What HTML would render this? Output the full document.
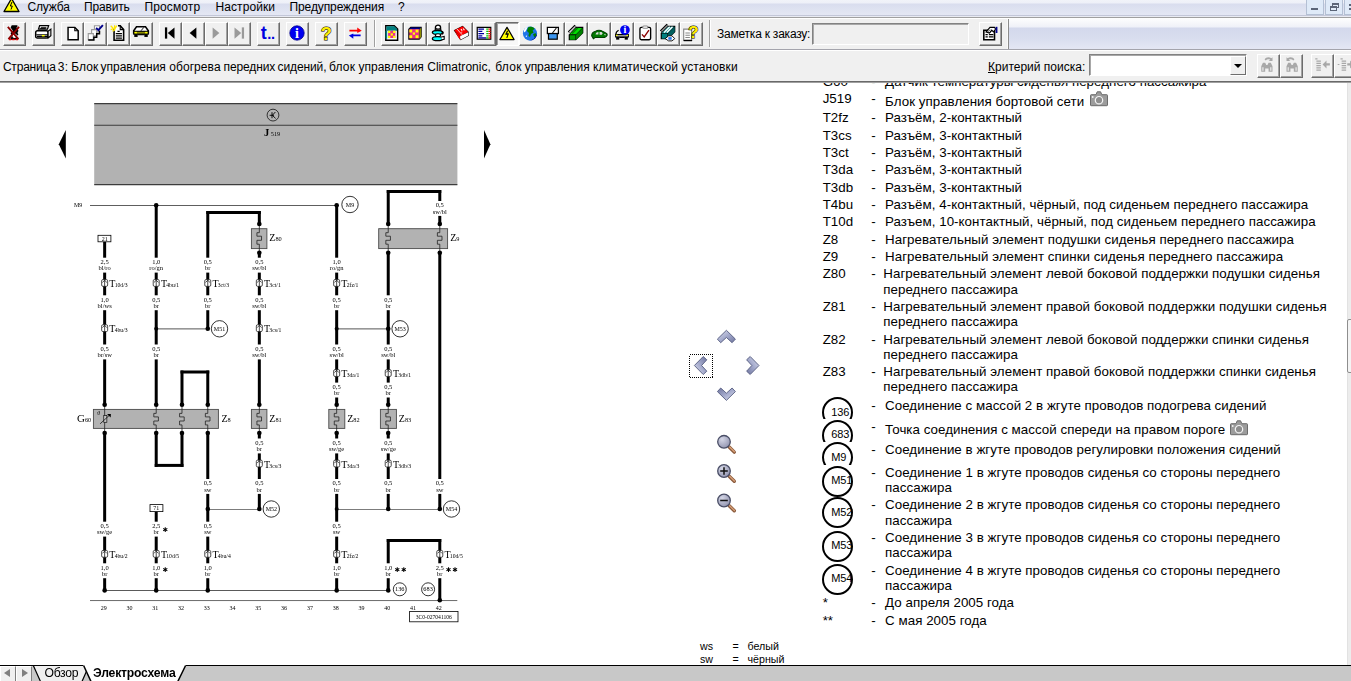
<!DOCTYPE html><html lang="ru"><head><meta charset="utf-8"><title>Электросхема</title><style>
*{box-sizing:border-box;margin:0;padding:0}
html,body{width:1351px;height:681px;overflow:hidden;background:#fff}
body{position:relative;font-family:"Liberation Sans",sans-serif;color:#000}
.abs{position:absolute}
#menubar{left:0;top:0;width:1351px;height:17px;background:linear-gradient(#f1f3f9 0,#eef0f8 3px,#d9ddee 4px,#dfe3f1 10px,#e4e7f4 15px,#c3c7d8 15px,#c3c7d8 16px,#e9ebf3 16px,#e9ebf3 17px)}
#menubar .mi{position:absolute;top:-1px;font-size:12px;line-height:16px;white-space:nowrap;color:#000}
#mline1{left:0;top:17px;width:1351px;height:1px;background:#a0a0a0}
#mline2{left:0;top:18px;width:1351px;height:1px;background:#fff}
#tb1{left:0;top:19px;width:1008px;height:30px;background:#f0f0f0}
#tb1r{left:1009px;top:18px;width:342px;height:31px;background:linear-gradient(#fefefe 0,#eff1f8 9px,#d3d8ec 10px,#d8ddee 20px,#e3e6f3 30px)}
#tline1{left:0;top:49px;width:1351px;height:1px;background:#a4a4ac}
#tline2{left:0;top:50px;width:1351px;height:1px;background:#fff}
#tb2{left:0;top:51px;width:1351px;height:30px;background:#f0f0f0}
#tb2l1{left:0;top:81px;width:1351px;height:1px;background:#696969}
#tb2l2{left:0;top:82px;width:1351px;height:1px;background:#a0a0a0}
.btn{position:absolute;width:23px;height:24px;background:#f0f0f0;border:1px solid;border-color:#fff #6c6c6c #6c6c6c #fff;box-shadow:inset -1px -1px 0 #a2a2a2}
.btn.down{background:#f8f8f8;border-color:#6c6c6c #fff #fff #6c6c6c;box-shadow:inset 1px 1px 0 #a2a2a2}
.btn svg{position:absolute;left:0.5px;top:0.5px;width:18px;height:18px;overflow:visible}
.sep{position:absolute;top:20px;width:2px;height:27px;border-left:1px solid #a0a0a0;border-right:1px solid #fff}
.lbl{position:absolute;font-size:12px;white-space:nowrap;line-height:16px}
.sunk{position:absolute;border:1px solid;border-color:#828282 #fff #fff #828282;box-shadow:inset 1px 1px 0 #a8a8a8}
.wbtn{position:absolute;top:-1px;height:16px;width:18px;background:#dfeaf8;border:1px solid #b4c0d4}
#tabbar{left:0;top:665px;width:1351px;height:16px;background:#c8c8c8;border-top:1.5px solid #000}

#rp{left:800px;top:83px;width:547px;height:582px;overflow:hidden;font-size:13.33px;line-height:16px;color:#000}
#rp .k{position:absolute;left:22.7px;white-space:nowrap}
#rp .d{position:absolute;left:71.2px;white-space:nowrap}
#rp .t{position:absolute;left:85.1px;white-space:nowrap;letter-spacing:.035px}
#rp .cam{position:absolute}
.cir{position:absolute;left:22px;width:31px;overflow:hidden}
.cir i{position:absolute;left:0;top:0;width:31px;height:31px;border:2px solid #000;border-radius:50%;display:block}
.cir b{position:absolute;left:9.3px;top:8.6px;font-weight:normal;font-size:11px;line-height:12px;font-style:normal;white-space:nowrap;letter-spacing:-.15px}
#sb{left:1347px;top:83px;width:4px;height:582px;background:#ececec;border-left:1px solid #e2e2e2}
#sbt{left:1347px;top:319px;width:6px;height:54px;background:#f4f4f4;border:1px solid #8e8e8e;border-radius:2px}
</style></head><body><svg class="abs" id="diagram" style="left:0;top:83px;will-change:transform" width="560" height="582" viewBox="0 83 560 582" font-family='"Liberation Serif",serif' fill="#000"><rect x="94.2" y="103.6" width="363.2" height="81" fill="#b2b2b2"/><path d="M94.2 103.6H457.4M94.2 125.3H457.4M94.2 184.6H457.4" stroke="#3c3c3c" stroke-width="1.1"/><circle cx="273" cy="115.1" r="5.9" fill="none" stroke="#111" stroke-width="0.8"/><path d="M269.6 115.3H274M272 112.2V118.2M275.4 112L272.3 115.3L275.6 118.4" stroke="#000" stroke-width="0.9" fill="none"/><text x="264" y="136" font-size="10.5" font-weight="bold">J<tspan font-size="6.3" font-weight="normal" dx="1.5">519</tspan></text><path d="M58.8 144.2L65.8 129.9V158.5Z" fill="#000"/><path d="M490.4 144.3L484 130V158.6Z" fill="#000"/><path d="M90 205.5H336.67" stroke="#5e5e5e" stroke-width="1"/><text x="74" y="207.3" font-size="6" text-anchor="start" font-weight="normal" fill="#000">M9</text><path d="M156.21 328.9H207.77" stroke="#555" stroke-width="1"/><path d="M336.67 328.9H388.23" stroke="#555" stroke-width="1"/><path d="M207.77 509.5H259.33" stroke="#7c7c7c" stroke-width="1"/><path d="M336.67 509.5H439.79" stroke="#7c7c7c" stroke-width="1"/><path d="M104.65 590.5H388.23" stroke="#5a5a5a" stroke-width="1"/><path d="M90 600.55H457.3" stroke="#6c6c6c" stroke-width="1"/><rect x="251.4" y="228.7" width="15.5" height="19.9" fill="#b2b2b2" stroke="#4a4a4a" stroke-width="0.9"/><rect x="378.7" y="228.7" width="68.9" height="19.9" fill="#b2b2b2" stroke="#4a4a4a" stroke-width="0.9"/><rect x="93.4" y="409.4" width="125.0" height="19.0" fill="#b2b2b2" stroke="#4a4a4a" stroke-width="0.9"/><rect x="251.4" y="409.4" width="15.5" height="19.0" fill="#b2b2b2" stroke="#4a4a4a" stroke-width="0.9"/><rect x="328.8" y="409.4" width="16.0" height="19.0" fill="#b2b2b2" stroke="#4a4a4a" stroke-width="0.9"/><rect x="380.4" y="409.4" width="16.0" height="19.0" fill="#b2b2b2" stroke="#4a4a4a" stroke-width="0.9"/><path d="M104.65 241.8V257.7" stroke="#000" stroke-width="3.0"/><text x="104.65" y="264.0" font-size="6.5" text-anchor="middle" font-weight="normal" fill="#000">2,5</text><text x="104.65" y="270.35" font-size="6.5" text-anchor="middle" font-weight="normal" fill="#000">bl/ro</text><path d="M104.65 272.6V295.3" stroke="#000" stroke-width="3.0"/><text x="104.65" y="301.6" font-size="6.5" text-anchor="middle" font-weight="normal" fill="#000">1,0</text><text x="104.65" y="307.95" font-size="6.5" text-anchor="middle" font-weight="normal" fill="#000">bl/ws</text><path d="M104.65 310.20000000000005V344.5" stroke="#000" stroke-width="3.0"/><text x="104.65" y="350.8" font-size="6.5" text-anchor="middle" font-weight="normal" fill="#000">0,5</text><text x="104.65" y="357.15" font-size="6.5" text-anchor="middle" font-weight="normal" fill="#000">br/sw</text><path d="M104.65 359.40000000000003V404.7" stroke="#000" stroke-width="3.0"/><path d="M104.65 433V521.7" stroke="#000" stroke-width="3.0"/><text x="104.65" y="528.0" font-size="6.5" text-anchor="middle" font-weight="normal" fill="#000">0,5</text><text x="104.65" y="534.35" font-size="6.5" text-anchor="middle" font-weight="normal" fill="#000">sw/ge</text><path d="M104.65 536.6V563.3000000000001" stroke="#000" stroke-width="3.0"/><text x="104.65" y="569.6" font-size="6.5" text-anchor="middle" font-weight="normal" fill="#000">1,0</text><text x="104.65" y="575.95" font-size="6.5" text-anchor="middle" font-weight="normal" fill="#000">br</text><path d="M104.65 578.2V590.4" stroke="#000" stroke-width="3.0"/><rect x="98" y="235.3" width="12.9" height="6.5" fill="#fff" stroke="#000" stroke-width="0.8"/><text x="104.65" y="240.9" font-size="6" text-anchor="middle" font-weight="normal" fill="#000">21</text><path d="M156.21 205.2V257.7" stroke="#000" stroke-width="3.0"/><text x="156.21" y="264.0" font-size="6.5" text-anchor="middle" font-weight="normal" fill="#000">1,0</text><text x="156.21" y="270.35" font-size="6.5" text-anchor="middle" font-weight="normal" fill="#000">ro/gn</text><path d="M156.21 272.6V295.3" stroke="#000" stroke-width="3.0"/><text x="156.21" y="301.6" font-size="6.5" text-anchor="middle" font-weight="normal" fill="#000">0,5</text><text x="156.21" y="307.95" font-size="6.5" text-anchor="middle" font-weight="normal" fill="#000">br</text><path d="M156.21 310.20000000000005V344.5" stroke="#000" stroke-width="3.0"/><text x="156.21" y="350.8" font-size="6.5" text-anchor="middle" font-weight="normal" fill="#000">0,5</text><text x="156.21" y="357.15" font-size="6.5" text-anchor="middle" font-weight="normal" fill="#000">br</text><path d="M156.21 359.40000000000003V404.7" stroke="#000" stroke-width="3.0"/><path d="M156.21 433V466.9" stroke="#000" stroke-width="3.0"/><path d="M154.71 465.4H183.49" stroke="#000" stroke-width="3.0"/><path d="M181.99 433V466.9" stroke="#000" stroke-width="3.0"/><path d="M156.21 511.7V521.7" stroke="#000" stroke-width="3.0"/><text x="156.21" y="528.0" font-size="6.5" text-anchor="middle" font-weight="normal" fill="#000">2,5</text><text x="156.21" y="534.35" font-size="6.5" text-anchor="middle" font-weight="normal" fill="#000">br</text><path d="M156.21 536.6V563.3000000000001" stroke="#000" stroke-width="3.0"/><text x="156.21" y="569.6" font-size="6.5" text-anchor="middle" font-weight="normal" fill="#000">1,0</text><text x="156.21" y="575.95" font-size="6.5" text-anchor="middle" font-weight="normal" fill="#000">br</text><path d="M156.21 578.2V590.4" stroke="#000" stroke-width="3.0"/><rect x="150" y="504.6" width="12.9" height="7" fill="#fff" stroke="#000" stroke-width="0.8"/><text x="156.21" y="510.4" font-size="6" text-anchor="middle" font-weight="normal" fill="#000">71</text><path d="M181.99 370.5V404.7" stroke="#000" stroke-width="3.0"/><path d="M180.49 372.0H209.27" stroke="#000" stroke-width="3.0"/><path d="M207.77 370.5V404.7" stroke="#000" stroke-width="3.0"/><path d="M206.27 212.6H260.83" stroke="#000" stroke-width="3.0"/><path d="M207.77 211.1V257.7" stroke="#000" stroke-width="3.0"/><text x="207.77" y="264.0" font-size="6.5" text-anchor="middle" font-weight="normal" fill="#000">0,5</text><text x="207.77" y="270.35" font-size="6.5" text-anchor="middle" font-weight="normal" fill="#000">br</text><path d="M207.77 272.6V295.3" stroke="#000" stroke-width="3.0"/><text x="207.77" y="301.6" font-size="6.5" text-anchor="middle" font-weight="normal" fill="#000">0,5</text><text x="207.77" y="307.95" font-size="6.5" text-anchor="middle" font-weight="normal" fill="#000">br</text><path d="M207.77 310.20000000000005V328.8" stroke="#000" stroke-width="3.0"/><path d="M207.77 433V479.0" stroke="#000" stroke-width="3.0"/><text x="207.77" y="485.3" font-size="6.5" text-anchor="middle" font-weight="normal" fill="#000">0,5</text><text x="207.77" y="491.65" font-size="6.5" text-anchor="middle" font-weight="normal" fill="#000">sw</text><path d="M207.77 493.90000000000003V521.7" stroke="#000" stroke-width="3.0"/><text x="207.77" y="528.0" font-size="6.5" text-anchor="middle" font-weight="normal" fill="#000">0,5</text><text x="207.77" y="534.35" font-size="6.5" text-anchor="middle" font-weight="normal" fill="#000">sw</text><path d="M207.77 536.6V563.3000000000001" stroke="#000" stroke-width="3.0"/><text x="207.77" y="569.6" font-size="6.5" text-anchor="middle" font-weight="normal" fill="#000">1,0</text><text x="207.77" y="575.95" font-size="6.5" text-anchor="middle" font-weight="normal" fill="#000">br</text><path d="M207.77 578.2V590.4" stroke="#000" stroke-width="3.0"/><path d="M259.33 211.1V224" stroke="#000" stroke-width="3.0"/><path d="M259.33 252.7V257.7" stroke="#000" stroke-width="3.0"/><text x="259.33" y="264.0" font-size="6.5" text-anchor="middle" font-weight="normal" fill="#000">0,5</text><text x="259.33" y="270.35" font-size="6.5" text-anchor="middle" font-weight="normal" fill="#000">sw/bl</text><path d="M259.33 272.6V295.3" stroke="#000" stroke-width="3.0"/><text x="259.33" y="301.6" font-size="6.5" text-anchor="middle" font-weight="normal" fill="#000">0,5</text><text x="259.33" y="307.95" font-size="6.5" text-anchor="middle" font-weight="normal" fill="#000">sw/bl</text><path d="M259.33 310.20000000000005V344.5" stroke="#000" stroke-width="3.0"/><text x="259.33" y="350.8" font-size="6.5" text-anchor="middle" font-weight="normal" fill="#000">0,5</text><text x="259.33" y="357.15" font-size="6.5" text-anchor="middle" font-weight="normal" fill="#000">sw/bl</text><path d="M259.33 359.40000000000003V404.7" stroke="#000" stroke-width="3.0"/><path d="M259.33 433V438.5" stroke="#000" stroke-width="3.0"/><text x="259.33" y="444.8" font-size="6.5" text-anchor="middle" font-weight="normal" fill="#000">0,5</text><text x="259.33" y="451.15" font-size="6.5" text-anchor="middle" font-weight="normal" fill="#000">br</text><path d="M259.33 453.40000000000003V479.0" stroke="#000" stroke-width="3.0"/><text x="259.33" y="485.3" font-size="6.5" text-anchor="middle" font-weight="normal" fill="#000">0,5</text><text x="259.33" y="491.65" font-size="6.5" text-anchor="middle" font-weight="normal" fill="#000">br</text><path d="M259.33 493.90000000000003V509" stroke="#000" stroke-width="3.0"/><path d="M336.67 205.2V257.7" stroke="#000" stroke-width="3.0"/><text x="336.67" y="264.0" font-size="6.5" text-anchor="middle" font-weight="normal" fill="#000">1,0</text><text x="336.67" y="270.35" font-size="6.5" text-anchor="middle" font-weight="normal" fill="#000">ro/gn</text><path d="M336.67 272.6V295.3" stroke="#000" stroke-width="3.0"/><text x="336.67" y="301.6" font-size="6.5" text-anchor="middle" font-weight="normal" fill="#000">0,5</text><text x="336.67" y="307.95" font-size="6.5" text-anchor="middle" font-weight="normal" fill="#000">br</text><path d="M336.67 310.20000000000005V344.5" stroke="#000" stroke-width="3.0"/><text x="336.67" y="350.8" font-size="6.5" text-anchor="middle" font-weight="normal" fill="#000">0,5</text><text x="336.67" y="357.15" font-size="6.5" text-anchor="middle" font-weight="normal" fill="#000">sw/bl</text><path d="M336.67 359.40000000000003V382.59999999999997" stroke="#000" stroke-width="3.0"/><text x="336.67" y="388.9" font-size="6.5" text-anchor="middle" font-weight="normal" fill="#000">0,5</text><text x="336.67" y="395.25" font-size="6.5" text-anchor="middle" font-weight="normal" fill="#000">br</text><path d="M336.67 397.5V404.7" stroke="#000" stroke-width="3.0"/><path d="M336.67 433V438.5" stroke="#000" stroke-width="3.0"/><text x="336.67" y="444.8" font-size="6.5" text-anchor="middle" font-weight="normal" fill="#000">0,5</text><text x="336.67" y="451.15" font-size="6.5" text-anchor="middle" font-weight="normal" fill="#000">sw/ge</text><path d="M336.67 453.40000000000003V479.0" stroke="#000" stroke-width="3.0"/><text x="336.67" y="485.3" font-size="6.5" text-anchor="middle" font-weight="normal" fill="#000">0,5</text><text x="336.67" y="491.65" font-size="6.5" text-anchor="middle" font-weight="normal" fill="#000">br</text><path d="M336.67 493.90000000000003V521.7" stroke="#000" stroke-width="3.0"/><text x="336.67" y="528.0" font-size="6.5" text-anchor="middle" font-weight="normal" fill="#000">0,5</text><text x="336.67" y="534.35" font-size="6.5" text-anchor="middle" font-weight="normal" fill="#000">sw</text><path d="M336.67 536.6V563.3000000000001" stroke="#000" stroke-width="3.0"/><text x="336.67" y="569.6" font-size="6.5" text-anchor="middle" font-weight="normal" fill="#000">1,0</text><text x="336.67" y="575.95" font-size="6.5" text-anchor="middle" font-weight="normal" fill="#000">br</text><path d="M336.67 578.2V590.4" stroke="#000" stroke-width="3.0"/><path d="M386.73 191.6H441.29" stroke="#000" stroke-width="3.0"/><path d="M388.23 190.1V224" stroke="#000" stroke-width="3.0"/><path d="M388.23 252.7V295.3" stroke="#000" stroke-width="3.0"/><text x="388.23" y="301.6" font-size="6.5" text-anchor="middle" font-weight="normal" fill="#000">0,5</text><text x="388.23" y="307.95" font-size="6.5" text-anchor="middle" font-weight="normal" fill="#000">br</text><path d="M388.23 310.20000000000005V344.5" stroke="#000" stroke-width="3.0"/><text x="388.23" y="350.8" font-size="6.5" text-anchor="middle" font-weight="normal" fill="#000">0,5</text><text x="388.23" y="357.15" font-size="6.5" text-anchor="middle" font-weight="normal" fill="#000">sw/bl</text><path d="M388.23 359.40000000000003V382.59999999999997" stroke="#000" stroke-width="3.0"/><text x="388.23" y="388.9" font-size="6.5" text-anchor="middle" font-weight="normal" fill="#000">0,5</text><text x="388.23" y="395.25" font-size="6.5" text-anchor="middle" font-weight="normal" fill="#000">br</text><path d="M388.23 397.5V404.7" stroke="#000" stroke-width="3.0"/><path d="M388.23 433V438.5" stroke="#000" stroke-width="3.0"/><text x="388.23" y="444.8" font-size="6.5" text-anchor="middle" font-weight="normal" fill="#000">0,5</text><text x="388.23" y="451.15" font-size="6.5" text-anchor="middle" font-weight="normal" fill="#000">sw/ge</text><path d="M388.23 453.40000000000003V479.0" stroke="#000" stroke-width="3.0"/><text x="388.23" y="485.3" font-size="6.5" text-anchor="middle" font-weight="normal" fill="#000">0,5</text><text x="388.23" y="491.65" font-size="6.5" text-anchor="middle" font-weight="normal" fill="#000">br</text><path d="M388.23 493.90000000000003V509" stroke="#000" stroke-width="3.0"/><path d="M386.73 540.5H441.29" stroke="#000" stroke-width="3.0"/><path d="M388.23 539V563.3000000000001" stroke="#000" stroke-width="3.0"/><text x="388.23" y="569.6" font-size="6.5" text-anchor="middle" font-weight="normal" fill="#000">1,0</text><text x="388.23" y="575.95" font-size="6.5" text-anchor="middle" font-weight="normal" fill="#000">br</text><path d="M388.23 578.2V590.4" stroke="#000" stroke-width="3.0"/><path d="M439.79 190.1V201.0" stroke="#000" stroke-width="3.0"/><text x="439.79" y="207.3" font-size="6.5" text-anchor="middle" font-weight="normal" fill="#000">0,5</text><text x="439.79" y="213.65" font-size="6.5" text-anchor="middle" font-weight="normal" fill="#000">sw/bl</text><path d="M439.79 215.9V224" stroke="#000" stroke-width="3.0"/><path d="M439.79 252.7V479.0" stroke="#000" stroke-width="3.0"/><text x="439.79" y="485.3" font-size="6.5" text-anchor="middle" font-weight="normal" fill="#000">0,5</text><text x="439.79" y="491.65" font-size="6.5" text-anchor="middle" font-weight="normal" fill="#000">sw</text><path d="M439.79 493.90000000000003V509" stroke="#000" stroke-width="3.0"/><path d="M439.79 539V563.3000000000001" stroke="#000" stroke-width="3.0"/><text x="439.79" y="569.6" font-size="6.5" text-anchor="middle" font-weight="normal" fill="#000">2,5</text><text x="439.79" y="575.95" font-size="6.5" text-anchor="middle" font-weight="normal" fill="#000">br</text><path d="M439.79 578.2V600.3" stroke="#000" stroke-width="3.0"/><path d="M156.21 404.9V413.4H153.81V416.9H158.41V421.0H153.81V424.9H156.21V432.9" fill="none" stroke="#222" stroke-width="0.8"/><path d="M181.99 404.9V413.4H179.59V416.9H184.19V421.0H179.59V424.9H181.99V432.9" fill="none" stroke="#222" stroke-width="0.8"/><path d="M207.77 404.9V413.4H205.37V416.9H209.97V421.0H205.37V424.9H207.77V432.9" fill="none" stroke="#222" stroke-width="0.8"/><path d="M259.33 404.9V413.4H256.93V416.9H261.53V421.0H256.93V424.9H259.33V432.9" fill="none" stroke="#222" stroke-width="0.8"/><path d="M336.67 404.9V413.4H334.27000000000004V416.9H338.87V421.0H334.27000000000004V424.9H336.67V432.9" fill="none" stroke="#222" stroke-width="0.8"/><path d="M388.23 404.9V413.4H385.83000000000004V416.9H390.43V421.0H385.83000000000004V424.9H388.23V432.9" fill="none" stroke="#222" stroke-width="0.8"/><path d="M259.33 224.2V232.7H256.93V236.2H261.53V240.29999999999998H256.93V244.2H259.33V253.1" fill="none" stroke="#222" stroke-width="0.8"/><path d="M388.23 224.2V232.7H385.83000000000004V236.2H390.43V240.29999999999998H385.83000000000004V244.2H388.23V253.1" fill="none" stroke="#222" stroke-width="0.8"/><path d="M439.79 224.2V232.7H437.39000000000004V236.2H441.99V240.29999999999998H437.39000000000004V244.2H439.79V253.1" fill="none" stroke="#222" stroke-width="0.8"/><path d="M104.65 404.7V433" stroke="#222" stroke-width="0.8"/><rect x="103.75" y="415.6" width="3.1" height="6.7" fill="#c4c4c4" stroke="#111" stroke-width="0.7"/><path d="M100.15 423.8L109.25 415.4" stroke="#111" stroke-width="0.8"/><path d="M107.05 414.1H110.85L110.65 417.6Z" fill="#000"/><text x="98.55" y="414.8" font-size="5.6" text-anchor="middle" font-weight="normal" fill="#000">ϑ</text><circle cx="104.65" cy="404.7" r="2.3" fill="#000"/><circle cx="104.65" cy="433" r="2.3" fill="#000"/><circle cx="156.21" cy="404.7" r="2.3" fill="#000"/><circle cx="156.21" cy="433" r="2.3" fill="#000"/><circle cx="181.99" cy="404.7" r="2.3" fill="#000"/><circle cx="181.99" cy="433" r="2.3" fill="#000"/><circle cx="207.77" cy="404.7" r="2.3" fill="#000"/><circle cx="207.77" cy="433" r="2.3" fill="#000"/><circle cx="259.33" cy="404.7" r="2.3" fill="#000"/><circle cx="259.33" cy="433" r="2.3" fill="#000"/><circle cx="336.67" cy="404.7" r="2.3" fill="#000"/><circle cx="336.67" cy="433" r="2.3" fill="#000"/><circle cx="388.23" cy="404.7" r="2.3" fill="#000"/><circle cx="388.23" cy="433" r="2.3" fill="#000"/><circle cx="259.33" cy="224" r="2.3" fill="#000"/><circle cx="259.33" cy="252.7" r="2.3" fill="#000"/><circle cx="388.23" cy="224" r="2.3" fill="#000"/><circle cx="388.23" cy="252.7" r="2.3" fill="#000"/><circle cx="439.79" cy="224" r="2.3" fill="#000"/><circle cx="439.79" cy="252.7" r="2.3" fill="#000"/><circle cx="156.21" cy="205.2" r="2.3" fill="#000"/><circle cx="336.67" cy="205.2" r="2.3" fill="#000"/><circle cx="156.21" cy="328.8" r="2.0" fill="#000"/><circle cx="207.77" cy="328.8" r="2.3" fill="#000"/><circle cx="336.67" cy="328.8" r="2.0" fill="#000"/><circle cx="388.23" cy="328.8" r="2.3" fill="#000"/><circle cx="207.77" cy="509" r="2.3" fill="#000"/><circle cx="259.33" cy="509" r="2.3" fill="#000"/><circle cx="336.67" cy="509" r="2.0" fill="#000"/><circle cx="388.23" cy="509" r="2.3" fill="#000"/><circle cx="439.79" cy="509" r="2.3" fill="#000"/><circle cx="104.65" cy="590.4" r="2.3" fill="#000"/><circle cx="156.21" cy="590.4" r="2.3" fill="#000"/><circle cx="207.77" cy="590.4" r="2.3" fill="#000"/><circle cx="336.67" cy="590.4" r="2.3" fill="#000"/><circle cx="388.23" cy="590.4" r="2.3" fill="#000"/><circle cx="439.79" cy="600.3" r="2.3" fill="#000"/><rect x="101.65" y="279.55" width="6.0" height="6.8" rx="1.3" fill="#fff" stroke="#222" stroke-width="0.8"/><path d="M104.65 279.75V286.35M102.45 282.45L104.65 280.25L106.85000000000001 282.45" stroke="#111" stroke-width="0.75" fill="none"/><text x="109.35" y="287.05" font-size="10">T</text><text transform="translate(114.65 287.05) scale(0.84 1)" font-size="6.8">10d/3</text><rect x="153.21" y="279.55" width="6.0" height="6.8" rx="1.3" fill="#fff" stroke="#222" stroke-width="0.8"/><path d="M156.21 279.75V286.35M154.01000000000002 282.45L156.21 280.25L158.41 282.45" stroke="#111" stroke-width="0.75" fill="none"/><text x="160.91" y="287.05" font-size="10">T</text><text transform="translate(166.21 287.05) scale(0.84 1)" font-size="6.8">4bu/1</text><rect x="204.77" y="279.55" width="6.0" height="6.8" rx="1.3" fill="#fff" stroke="#222" stroke-width="0.8"/><path d="M207.77 279.75V286.35M205.57000000000002 282.45L207.77 280.25L209.97 282.45" stroke="#111" stroke-width="0.75" fill="none"/><text x="212.47" y="287.05" font-size="10">T</text><text transform="translate(217.77 287.05) scale(0.84 1)" font-size="6.8">3ct/3</text><rect x="256.33" y="279.55" width="6.0" height="6.8" rx="1.3" fill="#fff" stroke="#222" stroke-width="0.8"/><path d="M259.33 279.75V286.35M257.13 282.45L259.33 280.25L261.53 282.45" stroke="#111" stroke-width="0.75" fill="none"/><text x="264.03" y="287.05" font-size="10">T</text><text transform="translate(269.33 287.05) scale(0.84 1)" font-size="6.8">3ct/1</text><rect x="333.67" y="279.55" width="6.0" height="6.8" rx="1.3" fill="#fff" stroke="#222" stroke-width="0.8"/><path d="M336.67 279.75V286.35M334.47 282.45L336.67 280.25L338.87 282.45" stroke="#111" stroke-width="0.75" fill="none"/><text x="341.37" y="287.05" font-size="10">T</text><text transform="translate(346.67 287.05) scale(0.84 1)" font-size="6.8">2fz/1</text><rect x="101.65" y="324.75" width="6.0" height="6.8" rx="1.3" fill="#fff" stroke="#222" stroke-width="0.8"/><path d="M104.65 324.95V331.55M102.45 327.65L104.65 325.45L106.85000000000001 327.65" stroke="#111" stroke-width="0.75" fill="none"/><text x="109.35" y="332.25" font-size="10">T</text><text transform="translate(114.65 332.25) scale(0.84 1)" font-size="6.8">4bu/3</text><rect x="256.33" y="324.75" width="6.0" height="6.8" rx="1.3" fill="#fff" stroke="#222" stroke-width="0.8"/><path d="M259.33 324.95V331.55M257.13 327.65L259.33 325.45L261.53 327.65" stroke="#111" stroke-width="0.75" fill="none"/><text x="264.03" y="332.25" font-size="10">T</text><text transform="translate(269.33 332.25) scale(0.84 1)" font-size="6.8">3cs/1</text><rect x="333.67" y="369.65" width="6.0" height="6.8" rx="1.3" fill="#fff" stroke="#222" stroke-width="0.8"/><path d="M336.67 369.85V376.45M334.47 372.55L336.67 370.35L338.87 372.55" stroke="#111" stroke-width="0.75" fill="none"/><text x="341.37" y="377.15" font-size="10">T</text><text transform="translate(346.67 377.15) scale(0.84 1)" font-size="6.8">3da/1</text><rect x="385.23" y="369.65" width="6.0" height="6.8" rx="1.3" fill="#fff" stroke="#222" stroke-width="0.8"/><path d="M388.23 369.85V376.45M386.03000000000003 372.55L388.23 370.35L390.43 372.55" stroke="#111" stroke-width="0.75" fill="none"/><text x="392.93" y="377.15" font-size="10">T</text><text transform="translate(398.23 377.15) scale(0.84 1)" font-size="6.8">3db/1</text><rect x="256.33" y="460.15" width="6.0" height="6.8" rx="1.3" fill="#fff" stroke="#222" stroke-width="0.8"/><path d="M259.33 460.35V466.95M257.13 463.05L259.33 460.85L261.53 463.05" stroke="#111" stroke-width="0.75" fill="none"/><text x="264.03" y="467.65" font-size="10">T</text><text transform="translate(269.33 467.65) scale(0.84 1)" font-size="6.8">3cs/3</text><rect x="333.67" y="460.15" width="6.0" height="6.8" rx="1.3" fill="#fff" stroke="#222" stroke-width="0.8"/><path d="M336.67 460.35V466.95M334.47 463.05L336.67 460.85L338.87 463.05" stroke="#111" stroke-width="0.75" fill="none"/><text x="341.37" y="467.65" font-size="10">T</text><text transform="translate(346.67 467.65) scale(0.84 1)" font-size="6.8">3da/3</text><rect x="385.23" y="460.15" width="6.0" height="6.8" rx="1.3" fill="#fff" stroke="#222" stroke-width="0.8"/><path d="M388.23 460.35V466.95M386.03000000000003 463.05L388.23 460.85L390.43 463.05" stroke="#111" stroke-width="0.75" fill="none"/><text x="392.93" y="467.65" font-size="10">T</text><text transform="translate(398.23 467.65) scale(0.84 1)" font-size="6.8">3db/3</text><rect x="101.65" y="550.45" width="6.0" height="6.8" rx="1.3" fill="#fff" stroke="#222" stroke-width="0.8"/><path d="M104.65 550.65V557.25M102.45 553.35L104.65 551.15L106.85000000000001 553.35" stroke="#111" stroke-width="0.75" fill="none"/><text x="109.35" y="557.95" font-size="10">T</text><text transform="translate(114.65 557.95) scale(0.84 1)" font-size="6.8">4bu/2</text><rect x="153.21" y="550.45" width="6.0" height="6.8" rx="1.3" fill="#fff" stroke="#222" stroke-width="0.8"/><path d="M156.21 550.65V557.25M154.01000000000002 553.35L156.21 551.15L158.41 553.35" stroke="#111" stroke-width="0.75" fill="none"/><text x="160.91" y="557.95" font-size="10">T</text><text transform="translate(166.21 557.95) scale(0.84 1)" font-size="6.8">10d/5</text><rect x="204.77" y="550.45" width="6.0" height="6.8" rx="1.3" fill="#fff" stroke="#222" stroke-width="0.8"/><path d="M207.77 550.65V557.25M205.57000000000002 553.35L207.77 551.15L209.97 553.35" stroke="#111" stroke-width="0.75" fill="none"/><text x="212.47" y="557.95" font-size="10">T</text><text transform="translate(217.77 557.95) scale(0.84 1)" font-size="6.8">4bu/4</text><rect x="333.67" y="550.45" width="6.0" height="6.8" rx="1.3" fill="#fff" stroke="#222" stroke-width="0.8"/><path d="M336.67 550.65V557.25M334.47 553.35L336.67 551.15L338.87 553.35" stroke="#111" stroke-width="0.75" fill="none"/><text x="341.37" y="557.95" font-size="10">T</text><text transform="translate(346.67 557.95) scale(0.84 1)" font-size="6.8">2fz/2</text><rect x="436.79" y="550.45" width="6.0" height="6.8" rx="1.3" fill="#fff" stroke="#222" stroke-width="0.8"/><path d="M439.79 550.65V557.25M437.59000000000003 553.35L439.79 551.15L441.99 553.35" stroke="#111" stroke-width="0.75" fill="none"/><text x="444.49" y="557.95" font-size="10">T</text><text transform="translate(449.79 557.95) scale(0.84 1)" font-size="6.8">10d/5</text><circle cx="350" cy="204.5" r="8.2" fill="#fff" stroke="#000" stroke-width="0.8"/><text x="350" y="206.6" font-size="6" text-anchor="middle" font-weight="normal" fill="#000">M9</text><circle cx="219.5" cy="328.8" r="8.2" fill="#fff" stroke="#000" stroke-width="0.8"/><text x="219.5" y="330.90000000000003" font-size="6" text-anchor="middle" font-weight="normal" fill="#000">M51</text><circle cx="400.1" cy="328.8" r="8.2" fill="#fff" stroke="#000" stroke-width="0.8"/><text x="400.1" y="330.90000000000003" font-size="6" text-anchor="middle" font-weight="normal" fill="#000">M53</text><circle cx="271.3" cy="509" r="8.2" fill="#fff" stroke="#000" stroke-width="0.8"/><text x="271.3" y="511.1" font-size="6" text-anchor="middle" font-weight="normal" fill="#000">M52</text><circle cx="451.5" cy="509" r="8.2" fill="#fff" stroke="#000" stroke-width="0.8"/><text x="451.5" y="511.1" font-size="6" text-anchor="middle" font-weight="normal" fill="#000">M54</text><circle cx="399.8" cy="589.3" r="6.5" fill="#fff" stroke="#000" stroke-width="0.8"/><text x="399.8" y="591.4" font-size="6.3" text-anchor="middle" font-weight="normal" fill="#000">136</text><circle cx="428.1" cy="589.3" r="6.5" fill="#fff" stroke="#000" stroke-width="0.8"/><text x="428.1" y="591.4" font-size="6.3" text-anchor="middle" font-weight="normal" fill="#000">683</text><text x="269.3" y="241.1" font-size="10">Z<tspan font-size="6.3" dy="0.15">80</tspan></text><text x="450.2" y="241.1" font-size="10">Z<tspan font-size="6.3" dy="0.15">9</tspan></text><text x="221.4" y="421.7" font-size="10">Z<tspan font-size="6.3" dy="0.15">8</tspan></text><text x="269.3" y="421.7" font-size="10">Z<tspan font-size="6.3" dy="0.15">81</tspan></text><text x="347.2" y="421.7" font-size="10">Z<tspan font-size="6.3" dy="0.15">82</tspan></text><text x="398.8" y="421.7" font-size="10">Z<tspan font-size="6.3" dy="0.15">83</tspan></text><text x="77" y="421.6" font-size="11">G<tspan font-size="6.3" dy="0.15">60</tspan></text><text x="165.3" y="532.0" font-size="6.6" text-anchor="middle" font-family="&quot;DejaVu Sans&quot;,sans-serif">✱</text><text x="165.3" y="572.4" font-size="6.6" text-anchor="middle" font-family="&quot;DejaVu Sans&quot;,sans-serif">✱</text><text x="397.2" y="572.4" font-size="6.6" text-anchor="middle" font-family="&quot;DejaVu Sans&quot;,sans-serif">✱</text><text x="403.7" y="572.4" font-size="6.6" text-anchor="middle" font-family="&quot;DejaVu Sans&quot;,sans-serif">✱</text><text x="448.4" y="572.4" font-size="6.6" text-anchor="middle" font-family="&quot;DejaVu Sans&quot;,sans-serif">✱</text><text x="454.9" y="572.4" font-size="6.6" text-anchor="middle" font-family="&quot;DejaVu Sans&quot;,sans-serif">✱</text><text x="103.65" y="609.6" font-size="6" text-anchor="middle" font-weight="normal" fill="#000">29</text><text x="129.43" y="609.6" font-size="6" text-anchor="middle" font-weight="normal" fill="#000">30</text><text x="155.21" y="609.6" font-size="6" text-anchor="middle" font-weight="normal" fill="#000">31</text><text x="180.99" y="609.6" font-size="6" text-anchor="middle" font-weight="normal" fill="#000">32</text><text x="206.77" y="609.6" font-size="6" text-anchor="middle" font-weight="normal" fill="#000">33</text><text x="232.55" y="609.6" font-size="6" text-anchor="middle" font-weight="normal" fill="#000">34</text><text x="258.33" y="609.6" font-size="6" text-anchor="middle" font-weight="normal" fill="#000">35</text><text x="284.11" y="609.6" font-size="6" text-anchor="middle" font-weight="normal" fill="#000">36</text><text x="309.89" y="609.6" font-size="6" text-anchor="middle" font-weight="normal" fill="#000">37</text><text x="335.67" y="609.6" font-size="6" text-anchor="middle" font-weight="normal" fill="#000">38</text><text x="361.45" y="609.6" font-size="6" text-anchor="middle" font-weight="normal" fill="#000">39</text><text x="387.23" y="609.6" font-size="6" text-anchor="middle" font-weight="normal" fill="#000">40</text><text x="413.01" y="609.6" font-size="6" text-anchor="middle" font-weight="normal" fill="#000">41</text><text x="438.79" y="609.6" font-size="6" text-anchor="middle" font-weight="normal" fill="#000">42</text><rect x="409.6" y="611.6" width="48.4" height="10.2" fill="#fff" stroke="#000" stroke-width="0.8"/><text x="433.8" y="618.8" font-size="5.6" text-anchor="middle" font-weight="normal" fill="#000">3C0-027041106</text></svg><svg class="abs" style="left:680px;top:320px" width="100" height="200" viewBox="680 320 100 200"><defs><linearGradient id="chg" x1="0" y1="0" x2="1" y2="1"><stop offset="0" stop-color="#dfe2f0"/><stop offset="0.500" stop-color="#a4aacc"/><stop offset="1" stop-color="#6e749e"/></linearGradient><radialGradient id="mgg" cx="0.350" cy="0.300" r="0.800"><stop offset="0" stop-color="#d4d6e6"/><stop offset="1" stop-color="#8e90ac"/></radialGradient></defs><g transform="translate(726.4 336.8) rotate(0)"><path d="M0 -6.500L9 2.300L5.700 5.900L0 0.700L-5.700 5.900L-9 2.300Z" fill="url(#chg)" stroke="#565c80" stroke-width="0.900" stroke-linejoin="round"/></g><g transform="translate(700.9 365.5) rotate(-90)"><path d="M0 -6.500L9 2.300L5.700 5.900L0 0.700L-5.700 5.900L-9 2.300Z" fill="url(#chg)" stroke="#565c80" stroke-width="0.900" stroke-linejoin="round"/></g><g transform="translate(752.5 365.5) rotate(90)"><path d="M0 -6.500L9 2.300L5.700 5.900L0 0.700L-5.700 5.900L-9 2.300Z" fill="url(#chg)" stroke="#565c80" stroke-width="0.900" stroke-linejoin="round"/></g><g transform="translate(726.4 393.9) rotate(180)"><path d="M0 -6.500L9 2.300L5.700 5.900L0 0.700L-5.700 5.900L-9 2.300Z" fill="url(#chg)" stroke="#565c80" stroke-width="0.900" stroke-linejoin="round"/></g><path d="M689.500 354.500H712.500V377.500H689.500Z" fill="none" stroke="#000" stroke-width="1" stroke-dasharray="1 1" shape-rendering="crispEdges"/><g transform="translate(725 442.8)"><path d="M4.200 4.200L9.300 9.300" stroke="#8a5a3c" stroke-width="3.400" stroke-linecap="round"/><path d="M4.600 4.200L9.400 9" stroke="#d8a078" stroke-width="1.300" stroke-linecap="round"/><circle cx="-1" cy="-1" r="6.300" fill="url(#mgg)" stroke="#4a4e66" stroke-width="1.300"/></g><g transform="translate(725 472)"><path d="M4.200 4.200L9.300 9.300" stroke="#8a5a3c" stroke-width="3.400" stroke-linecap="round"/><path d="M4.600 4.200L9.400 9" stroke="#d8a078" stroke-width="1.300" stroke-linecap="round"/><circle cx="-1" cy="-1" r="6.300" fill="url(#mgg)" stroke="#4a4e66" stroke-width="1.300"/><path d="M-4.800 -1H2.800M-1 -4.800V2.800" stroke="#111" stroke-width="1.500"/></g><g transform="translate(725 501.5)"><path d="M4.200 4.200L9.300 9.300" stroke="#8a5a3c" stroke-width="3.400" stroke-linecap="round"/><path d="M4.600 4.200L9.400 9" stroke="#d8a078" stroke-width="1.300" stroke-linecap="round"/><circle cx="-1" cy="-1" r="6.300" fill="url(#mgg)" stroke="#4a4e66" stroke-width="1.300"/><path d="M-4.800 -1H2.800" stroke="#111" stroke-width="1.500"/></g></svg><div id="rp" class="abs"><span class="k" style="top:-9.12px">G60</span><span class="d" style="top:-9.12px">-</span><span class="t" style="top:-9.12px">Датчик температуры сиденья переднего пассажира</span><span class="k" style="top:8.38px">J519</span><span class="d" style="top:8.38px">-</span><span class="t" style="top:10.98px">Блок управления бортовой сети</span><span class="k" style="top:27.38px">T2fz</span><span class="d" style="top:27.38px">-</span><span class="t" style="top:27.38px">Разъём, 2-контактный</span><span class="k" style="top:45.38px">T3cs</span><span class="d" style="top:45.38px">-</span><span class="t" style="top:45.38px">Разъём, 3-контактный</span><span class="k" style="top:62.38px">T3ct</span><span class="d" style="top:62.38px">-</span><span class="t" style="top:62.38px">Разъём, 3-контактный</span><span class="k" style="top:79.38px">T3da</span><span class="d" style="top:79.38px">-</span><span class="t" style="top:79.38px">Разъём, 3-контактный</span><span class="k" style="top:97.38px">T3db</span><span class="d" style="top:97.38px">-</span><span class="t" style="top:97.38px">Разъём, 3-контактный</span><span class="k" style="top:114.38px">T4bu</span><span class="d" style="top:114.38px">-</span><span class="t" style="top:114.38px">Разъём, 4-контактный, чёрный, под сиденьем переднего пассажира</span><span class="k" style="top:131.38px">T10d</span><span class="d" style="top:131.38px">-</span><span class="t" style="top:131.38px">Разъем, 10-контактный, чёрный, под сиденьем переднего пассажира</span><span class="k" style="top:149.38px">Z8</span><span class="d" style="top:149.38px">-</span><span class="t" style="top:149.38px">Нагревательный элемент подушки сиденья переднего пассажира</span><span class="k" style="top:166.38px">Z9</span><span class="d" style="top:166.38px">-</span><span class="t" style="top:166.38px">Нагревательный элемент спинки сиденья переднего пассажира</span><span class="k" style="top:183.38px">Z80</span><span class="d" style="top:183.38px">-</span><span class="t" style="top:183.38px;left:83.3px">Нагревательный элемент левой боковой поддержки подушки сиденья</span><span class="t" style="top:199.38px;left:83.3px">переднего пассажира</span><span class="k" style="top:216.38px">Z81</span><span class="d" style="top:216.38px">-</span><span class="t" style="top:216.38px;left:83.3px">Нагревательный элемент правой боковой поддержки подушки сиденья</span><span class="t" style="top:231.38px;left:83.3px">переднего пассажира</span><span class="k" style="top:249.38px">Z82</span><span class="d" style="top:249.38px">-</span><span class="t" style="top:249.38px;left:83.3px">Нагревательный элемент левой боковой поддержки спинки сиденья</span><span class="t" style="top:264.38px;left:83.3px">переднего пассажира</span><span class="k" style="top:281.38px">Z83</span><span class="d" style="top:281.38px">-</span><span class="t" style="top:281.38px;left:83.3px">Нагревательный элемент правой боковой поддержки спинки сиденья</span><span class="t" style="top:296.38px;left:83.3px">переднего пассажира</span><div class="cir" style="top:314.3px;height:21.3px"><i></i><b>136</b></div><span class="d" style="top:314.88px">-</span><span class="t" style="top:314.88px">Соединение с массой 2 в жгуте проводов подогрева сидений</span><div class="cir" style="top:336.9px;height:21.8px"><i></i><b>683</b></div><span class="d" style="top:336.38px">-</span><span class="t" style="top:339.38px">Точка соединения с массой спереди на правом пороге</span><div class="cir" style="top:359.3px;height:22.4px"><i></i><b>M9</b></div><span class="d" style="top:359.38px">-</span><span class="t" style="top:359.38px">Соединение в жгуте проводов регулировки положения сидений</span><div class="cir" style="top:382.6px;height:32px"><i></i><b>M51</b></div><span class="d" style="top:382.38px">-</span><span class="t" style="top:382.38px">Соединение 1 в жгуте проводов сиденья со стороны переднего</span><span class="t" style="top:397.38px">пассажира</span><div class="cir" style="top:414.4px;height:32px"><i></i><b>M52</b></div><span class="d" style="top:414.38px">-</span><span class="t" style="top:414.38px">Соединение 2 в жгуте проводов сиденья со стороны переднего</span><span class="t" style="top:430.38px">пассажира</span><div class="cir" style="top:447.7px;height:32px"><i></i><b>M53</b></div><span class="d" style="top:447.38px">-</span><span class="t" style="top:447.38px">Соединение 3 в жгуте проводов сиденья со стороны переднего</span><span class="t" style="top:462.38px">пассажира</span><div class="cir" style="top:480.9px;height:32px"><i></i><b>M54</b></div><span class="d" style="top:480.38px">-</span><span class="t" style="top:480.38px">Соединение 4 в жгуте проводов сиденья со стороны переднего</span><span class="t" style="top:495.38px">пассажира</span><span class="k" style="top:512.38px">*</span><span class="d" style="top:512.38px">-</span><span class="t" style="top:512.38px">До апреля 2005 года</span><span class="k" style="top:530.38px">**</span><span class="d" style="top:530.38px">-</span><span class="t" style="top:530.38px">С мая 2005 года</span><svg class="cam" style="left:289.500px;top:7.500px" width="19" height="16" viewBox="0 0 19 16"><path d="M1.200 3.700h4.800l1.200-2.900h3.400l1.200 2.900h5q.700 0 .700.700v9.600q0 .700-.700.700H1.200q-.700 0-.700-.700V4.400q0-.700.700-.700z" fill="#9c9c9c" stroke="#6c6c6c" stroke-width="1"/><circle cx="9" cy="9.200" r="3.700" fill="#8e8e8e" stroke="#f4f4f4" stroke-width="1.200"/><circle cx="2.700" cy="6" r=".900" fill="#f4f4f4"/></svg><svg class="cam" style="left:430px;top:337px" width="19" height="16" viewBox="0 0 19 16"><path d="M1.200 3.700h4.800l1.200-2.900h3.400l1.200 2.900h5q.700 0 .700.700v9.600q0 .700-.700.700H1.200q-.700 0-.700-.700V4.400q0-.700.700-.700z" fill="#9c9c9c" stroke="#6c6c6c" stroke-width="1"/><circle cx="9" cy="9.200" r="3.700" fill="#8e8e8e" stroke="#f4f4f4" stroke-width="1.200"/><circle cx="2.700" cy="6" r=".900" fill="#f4f4f4"/></svg></div><div id="sb" class="abs"></div><div id="sbt" class="abs"></div><div class="abs" style="left:700px;top:640px;font-size:10.670px;line-height:13px;white-space:nowrap">ws</div><div class="abs" style="left:732.500px;top:640px;font-size:10.670px;line-height:13px;white-space:nowrap">=</div><div class="abs" style="left:747.500px;top:640px;font-size:10.670px;line-height:13px;white-space:nowrap">белый</div><div class="abs" style="left:700px;top:653px;font-size:10.670px;line-height:13px;white-space:nowrap">sw</div><div class="abs" style="left:732.500px;top:653px;font-size:10.670px;line-height:13px;white-space:nowrap">=</div><div class="abs" style="left:747.500px;top:653px;font-size:10.670px;line-height:13px;white-space:nowrap">чёрный</div><div id="menubar" class="abs"><svg class="abs" style="left:3px;top:-2px" width="17" height="15" viewBox="0 0 17 15"><path d="M8.5 0.5 L16 13.5 H1 Z" fill="#ffff00" stroke="#000" stroke-width="1.3" stroke-linejoin="round"/><path d="M9 4 L7.3 8 L9.3 8 L8 11.5" fill="none" stroke="#000" stroke-width="1"/></svg><span class="mi" style="left:27.5px;letter-spacing:-0.15px">Служба</span><span class="mi" style="left:84px;letter-spacing:-0.16px">Править</span><span class="mi" style="left:144.5px;letter-spacing:0.12px">Просмотр</span><span class="mi" style="left:215.5px;letter-spacing:0.08px">Настройки</span><span class="mi" style="left:289.5px;letter-spacing:-0.1px">Предупреждения</span><span class="mi" style="left:398px;letter-spacing:0px">?</span><div class="wbtn" style="left:1306px"><div class="abs" style="left:4px;top:8px;width:7px;height:2px;background:#5b6578"></div></div><div class="wbtn" style="left:1325px"><div class="abs" style="left:6px;top:3px;width:7px;height:5px;border:1px solid #5b6578;border-top-width:2px"></div><div class="abs" style="left:4px;top:6px;width:7px;height:5px;border:1px solid #5b6578;border-top-width:2px;background:#dfeaf8"></div></div><div class="wbtn" style="left:1344px"><div class="abs" style="left:4px;top:4px;width:6px;height:2px;background:#5b6578"></div><div class="abs" style="left:4px;top:8px;width:6px;height:2px;background:#5b6578"></div></div></div><div id="mline1" class="abs"></div><div id="mline2" class="abs"></div><div id="tb1" class="abs"></div><div id="tb1r" class="abs"></div><div id="tline1" class="abs"></div><div id="tline2" class="abs"></div><div id="tb2" class="abs"></div><div id="tb2l1" class="abs"></div><div id="tb2l2" class="abs"></div><div class="btn" style="left:3px;top:22px;width:23px"><svg viewBox="0 0 16 16"><path d="M6 1h5v2h-1l2 3-1 2 1 1-2 2 2 3H4l2-3-1-3 2-2-2-3z" fill="#000"/><circle cx="8.5" cy="10.5" r="2" fill="#fff"/><path d="M3.5 13.700h9" stroke="#f00" stroke-width="1.400" stroke-dasharray="2 1"/><path d="M2.500 2.500l9.500 11M12.500 2.500l-9.500 11" stroke="#8b0000" stroke-width="1.600"/></svg></div><div class="btn" style="left:32px;top:22px;width:23px"><svg viewBox="0 0 16 16"><path d="M5 1.5h8l-1 3H4z" fill="#fff" stroke="#000" stroke-width="1.1"/><path d="M6 3h5M5.5 4h5" stroke="#000" stroke-width=".8"/><rect x="1.5" y="6" width="11" height="6.5" rx="1.5" fill="#fff" stroke="#000" stroke-width="1.3"/><path d="M12.5 6.5l2.5-2v6l-2.500 2z" fill="#ddd" stroke="#000" stroke-width="1"/><path d="M2 9.500h10.500M2.500 11h10" stroke="#000" stroke-width="1"/><rect x="7" y="9.700" width="2.500" height="1.300" fill="#ff0"/></svg></div><div class="btn" style="left:61px;top:22px;width:23px"><svg viewBox="0 0 16 16"><path d="M4.5 3h6l3 3v8H4.5z" fill="#fff" stroke="#000" stroke-width="1.300"/><path d="M10.500 3v3h3" fill="none" stroke="#000" stroke-width="1"/></svg></div><div class="btn" style="left:84px;top:22px;width:23px"><svg viewBox="0 0 16 16"><path d="M7.500 1.500h4.500v5.500H7.500z" fill="#fff" stroke="#999" stroke-width="1"/><path d="M5 5h4.500v5.500H5z" fill="#fff" stroke="#999" stroke-width="1"/><path d="M2 8.500h4.500V14H2z" fill="#fff" stroke="#999" stroke-width="1"/><path d="M2 14.200h5v-2.500h2.500V8.700h2.500V6" fill="none" stroke="#000" stroke-width="1.300"/><path d="M9 3.500l2 2 4-4.500" fill="none" stroke="#00008b" stroke-width="1.700"/></svg></div><div class="btn" style="left:107px;top:22px;width:23px"><svg viewBox="0 0 16 16"><path d="M4.500 3.500V14.500h8.500V5L10 1.500H8" fill="#fff" stroke="#000" stroke-width="1.400"/><path d="M10 1.500V5h3" fill="none" stroke="#000" stroke-width="1"/><path d="M6 8.500h5.500M6 10.500h5.500M6 12.500h5.500M7.500 6.500h2" stroke="#000" stroke-width="1.100"/><path d="M1.500 1.500l4 4M5 1v3M1.500 5l3-1M7 1.500l-2 3M3 6.500l2-1" stroke="#ffe600" stroke-width="1.100"/></svg></div><div class="btn" style="left:130px;top:22px;width:23px"><svg viewBox="0 0 16 16"><path d="M4 2.500h8l2.500 3.500v2H1.500V6z" fill="#fff" stroke="#000" stroke-width="1.400"/><path d="M8 6l2.500-3" stroke="#000" stroke-width=".8"/><rect x="1.500" y="6.500" width="13" height="2.500" fill="#8c8c00" stroke="#000" stroke-width="1"/><rect x="2.300" y="7" width="2" height="1.300" fill="#ff0"/><rect x="11.700" y="7" width="2" height="1.300" fill="#ff0"/><rect x="2" y="9" width="3" height="2.500" fill="#000"/><rect x="11" y="9" width="3" height="2.500" fill="#000"/><path d="M5 9.500h6" stroke="#000"/></svg></div><div class="btn" style="left:159px;top:22px;width:23px"><svg viewBox="0 0 16 16"><rect x="3.500" y="3" width="2" height="10" fill="#000"/><path d="M12 3v10L6 8z" fill="#000"/></svg></div><div class="btn" style="left:182px;top:22px;width:23px"><svg viewBox="0 0 16 16"><path d="M11 3v10L5 8z" fill="#000"/></svg></div><div class="btn" style="left:205px;top:22px;width:23px"><svg viewBox="0 0 16 16"><path d="M5 3v10l6-5z" fill="#9a9a9a"/></svg></div><div class="btn" style="left:228px;top:22px;width:23px"><svg viewBox="0 0 16 16"><rect x="10.500" y="3" width="2" height="10" fill="#9a9a9a"/><path d="M4 3v10l6-5z" fill="#9a9a9a"/></svg></div><div class="btn" style="left:257px;top:22px;width:23px"><svg viewBox="0 0 16 16"><text x="1.500" y="13.500" font-family="&quot;Liberation Sans&quot;,sans-serif" font-size="16" font-weight="bold" fill="#0000e0" letter-spacing="-0.200">t<tspan font-size="13" dx="0.700">..</tspan></text></svg></div><div class="btn" style="left:286px;top:22px;width:23px"><svg viewBox="0 0 16 16"><circle cx="8" cy="8" r="6.400" fill="#0000f0" stroke="#00008b" stroke-width=".700"/><text x="8" y="12.300" font-family="&quot;Liberation Serif&quot;,serif" font-size="12.500" font-weight="bold" fill="#fff" text-anchor="middle">i</text></svg></div><div class="btn" style="left:315px;top:22px;width:23px"><svg viewBox="0 0 16 16"><text x="8.200" y="14" font-family="&quot;Liberation Sans&quot;,sans-serif" font-size="16" font-weight="bold" fill="#ffee00" stroke="#000" stroke-width=".900" text-anchor="middle" paint-order="stroke">?</text></svg></div><div class="btn" style="left:344px;top:22px;width:23px"><svg viewBox="0 0 16 16"><path d="M3 5.200h7V3L14 6 10 8V6.600H3z" fill="#f00"/><path d="M13 10.800H6.500v2.200L2.500 10.300 6.500 8.400v1H13z" fill="#0000e0"/></svg></div><div class="sep" style="left:374px"></div><div class="btn" style="left:381px;top:22px;width:23px"><svg viewBox="0 0 16 16"><path d="M2.500 1.500h7.500l3 3v10H2.500z" fill="#fff" stroke="#000" stroke-width="1.300"/><path d="M3 2h7l2.500 2.500V6H3z" fill="#008080"/><rect x="4.500" y="6" width="6.500" height="6.500" fill="#e8308a"/><g fill="#ff0"><rect x="4.500" y="6" width="2" height="2"/><rect x="9" y="6" width="2" height="2"/><rect x="4.500" y="10.500" width="2" height="2"/><rect x="9" y="10.500" width="2" height="2"/><rect x="6.800" y="8.300" width="2" height="2"/></g><path d="M3 6v7" stroke="#008080" stroke-width="1.500"/></svg></div><div class="btn" style="left:404px;top:22px;width:23px"><svg viewBox="0 0 16 16"><path d="M2 4.500L4 2.500h10v9l-2 2.500H2z" fill="#000"/><path d="M3 4.500h9v8.500H3z" fill="#e8308a"/><path d="M12 4.500l1.500-1.500v8.500L12 13z" fill="#8c8c00"/><path d="M3 4.500l1.500-1.500h9L12 4.500z" fill="#00008b"/><g fill="#ff0"><rect x="3" y="5" width="2.500" height="2.500"/><rect x="8.500" y="5" width="2.500" height="2.500"/><rect x="3" y="10" width="2.500" height="2.500"/><rect x="8.500" y="10" width="2.500" height="2.500"/><rect x="6" y="7.500" width="2" height="2"/></g></svg></div><div class="btn" style="left:427px;top:22px;width:23px"><svg viewBox="0 0 16 16"><ellipse cx="8" cy="3" rx="2.300" ry="2" fill="#fff" stroke="#000" stroke-width="1.200"/><path d="M5.500 4.500h5v2h-5z" fill="#fff" stroke="#000"/><ellipse cx="7.500" cy="7.500" rx="4.500" ry="1.700" fill="#0ff" stroke="#000" stroke-width="1.200"/><path d="M11 6.500c2 0 2 2 .5 2.500" fill="none" stroke="#000" stroke-width="1.200"/><ellipse cx="8" cy="10" rx="2.300" ry="1.300" fill="#fff" stroke="#000"/><ellipse cx="7.500" cy="13" rx="4.500" ry="1.800" fill="#0ff" stroke="#000" stroke-width="1.200"/><path d="M11 11.500l2.500-.5v2.500l-2 .5" fill="#fff" stroke="#000"/></svg></div><div class="btn" style="left:450px;top:22px;width:23px"><svg viewBox="0 0 16 16"><path d="M1.500 5.500L9.500 1.500 15 7v3.500L7.500 14.500z" fill="#000"/><path d="M2 5.500L9.500 2 14.500 7 7 10.800z" fill="#f00"/><path d="M7 10.800l7.500-3.500v3L7.500 14z" fill="#fff"/><path d="M2 5.500l5 5.300.5 3.200-1.500-1.500z" fill="#f00"/><path d="M8 4.500l1 1.500M10 4l1 1.500M8.500 7l.5.500" stroke="#fff" stroke-width="1"/><path d="M4.500 4.500l4.500 5" stroke="#fff" stroke-width=".7"/></svg></div><div class="btn" style="left:473px;top:22px;width:23px"><svg viewBox="0 0 16 16"><rect x="2" y="3" width="12" height="10.500" fill="#fff" stroke="#000" stroke-width="1.100"/><path d="M3 4.500h5M3 6.500h3.500M3 8.500h5M3 10.500h3.500M3 12.300h7" stroke="#0000a0" stroke-width="1"/><path d="M10 4.500h2M10 6.500h2M10 8.500h2M10 10.500h2M10 12.300h2" stroke="#00d000" stroke-width="1"/><path d="M12 4.500h2M12 6.500h2M12 8.500h2M12 10.500h2M12 12.300h2" stroke="#f00" stroke-width="1"/></svg></div><div class="btn down" style="left:496px;top:22px;width:23px"><svg viewBox="0 0 16 16"><path d="M8 3L14.300 13.800H1.700z" fill="#ff0" stroke="#000" stroke-width="1.100" stroke-linejoin="round"/><path d="M8.500 6L7.200 9h1.800L7.800 12.300" fill="none" stroke="#000" stroke-width="1"/><path d="M6.800 8.700h2.600" stroke="#000" stroke-width=".700"/></svg></div><div class="btn" style="left:519px;top:22px;width:23px"><svg viewBox="0 0 16 16"><circle cx="8" cy="8.500" r="6.300" fill="#1e74e8"/><path d="M8 14.800a6.300 6.300 0 0 0 6.300-6.300l-2.800 4.500z" fill="#00008b"/><path d="M6.200 3c1.800-.9 4.500-.500 5.900 1.300l-1.800 1.400.9 1.800-2.300 1.400-.9 2.700-1.400-.9.500-2.700-1.800-1.800z" fill="#008000"/><path d="M2.600 5.300c.9-1.800 2.300-2.700 3.600-2.900L4 6.700l-1.400.9z" fill="#fff"/><path d="M10.700 9l2.300-.9.500 1.800-1.800 1.800z" fill="#008000"/><circle cx="4.800" cy="10.800" r=".600" fill="#fff"/></svg></div><div class="btn" style="left:542px;top:22px;width:23px"><svg viewBox="0 0 16 16"><rect x="3" y="3" width="9.800" height="5.500" fill="#fff" stroke="#000" stroke-width="1.100"/><path d="M7.500 8l3.500-4.500" stroke="#000" stroke-width=".9"/><rect x="4" y="8.500" width="7.800" height="5" fill="#3c96f0" stroke="#000" stroke-width="1.100"/></svg></div><div class="btn" style="left:565px;top:22px;width:23px"><svg viewBox="0 0 16 16"><path d="M1.500 9.500L8 2.500h6.500V8L8 14.500H1.500z" fill="#000"/><path d="M2.500 10h5v4h-5z" fill="#00a000"/><path d="M8 9.500l6-6V8l-6 6z" fill="#008000"/><path d="M2.500 9L8 3.500h5.500L8 9z" fill="#00e000"/><path d="M4.500 8.500l5-5" stroke="#008000" stroke-width="1.200"/><path d="M1.500 7.500L7.500 1.500" stroke="#000" stroke-width="2.200"/><path d="M2 7.500L7.500 2" stroke="#fff" stroke-width=".9"/></svg></div><div class="btn" style="left:588px;top:22px;width:23px"><svg viewBox="0 0 16 16"><path d="M1.500 10.500C1.500 8 3 7 5 6.500C6.500 5.200 9.500 5.200 11 6.500L14 8C15.600 8.600 15.600 10 14.500 11L13 12H4.500L3 13Z" fill="#007800" stroke="#004000" stroke-width="1"/><path d="M5 9C5.300 7.800 6.300 7.200 7.500 7.200V9.300H5Z" fill="#dcdcdc"/><path d="M8.500 7.200H10.300L11.300 8.300 10.500 9.500H8.500Z" fill="#dcdcdc"/><path d="M12.300 9.500l1.500-.800v1.500z" fill="#dcdcdc"/></svg></div><div class="btn" style="left:611px;top:22px;width:23px"><svg viewBox="0 0 16 16"><path d="M5 5.500C3 6.500 2.500 8.200 2.500 9.500" fill="none" stroke="#000" stroke-width="1.100"/><path d="M2.300 9.300h11.400v2.300H2.300z" fill="#999" stroke="#000" stroke-width=".900"/><rect x="2.600" y="9.500" width="1.500" height="1.100" fill="#ff0"/><rect x="11.900" y="9.500" width="1.500" height="1.100" fill="#ff0"/><rect x="2.800" y="11.600" width="2.800" height="2.300" fill="#000"/><rect x="10.400" y="11.600" width="2.800" height="2.300" fill="#000"/><path d="M5.600 12h4.800" stroke="#000" stroke-width=".900"/><circle cx="10.600" cy="5.300" r="4.300" fill="#0000f0"/><text x="10.600" y="8.300" font-family="&quot;Liberation Serif&quot;,serif" font-size="9" font-weight="bold" fill="#fff" text-anchor="middle">i</text></svg></div><div class="btn" style="left:634px;top:22px;width:23px"><svg viewBox="0 0 16 16"><rect x="3.500" y="3" width="9.500" height="11" rx="1.300" fill="#fff" stroke="#000" stroke-width="1.200"/><rect x="6" y="1.800" width="4.500" height="2" rx=".900" fill="#fff" stroke="#888" stroke-width=".900"/><path d="M5.300 9.200l2 2.300 4.200-6" fill="none" stroke="#8b0000" stroke-width="1.200"/></svg></div><div class="btn" style="left:657px;top:22px;width:23px"><svg viewBox="0 0 16 16"><path d="M1.500 8L8 1.500h6.500V7L8 13.500H1.500z" fill="#000"/><path d="M2.500 8.500h5v4.500h-5z" fill="#008080"/><path d="M8 8.500l6-6V7l-6 6z" fill="#006060"/><path d="M2.500 8L8 2.500h5.500L8 8z" fill="#20a0a0"/><path d="M4.500 7.500l5-5M7 7.500l5-5" stroke="#fff" stroke-width="1.100"/><path d="M1.500 6.500L7.500.5" stroke="#000" stroke-width="2"/><path d="M2 6.500L7.500 1" stroke="#fff" stroke-width=".8"/><path d="M5.500 13l3-2.500h3l2.500 2.500-2.500 2h-3z" fill="#fff" stroke="#000" stroke-width=".8"/><rect x="8.300" y="11.700" width="3" height="2.300" fill="#1e74e8"/></svg></div><div class="btn" style="left:680px;top:22px;width:23px"><svg viewBox="0 0 16 16"><path d="M1.500 4.500h7v10h-7z" fill="#fff" stroke="#888" stroke-width="1"/><path d="M1.500 14.700h7.500" stroke="#000" stroke-width="1.200"/><path d="M3 8h4M3 10h4M3 12h4" stroke="#888" stroke-width="1"/><text x="10.200" y="12.800" font-family="&quot;Liberation Sans&quot;,sans-serif" font-size="15" font-weight="bold" fill="#ffee00" stroke="#000" stroke-width=".900" text-anchor="middle" paint-order="stroke">?</text></svg></div><div class="sep" style="left:709px"></div><div class="lbl" style="left:717px;top:26px;letter-spacing:-0.22px">Заметка к заказу:</div><div class="sunk" style="left:812px;top:23px;width:157px;height:22px;background:#f0f0f0"></div><div class="btn" style="left:979px;top:22px;width:23px"><svg viewBox="0 0 16 16"><path d="M2.5 5.500h9.500v8.500H2.500z" fill="#fff" stroke="#000" stroke-width="1.400"/><path d="M4 9.500h2M7 9.500h4M4 11.500h2M7 11.500h4" stroke="#000" stroke-width="1.100"/><path d="M4.500 7L8 3h4l1 1.500L11 7 9.500 5.500 7.500 8z" fill="#fff" stroke="#000" stroke-width="1"/><path d="M6 7l2-2M7.500 8l2-2" stroke="#000" stroke-width=".7"/><rect x="13" y="2.500" width="1.600" height="5.500" fill="#00008b"/></svg></div><div class="abs" style="left:1007px;top:19px;width:1px;height:30px;background:#fafafa"></div><div class="abs" style="left:1008px;top:19px;width:1px;height:30px;background:#8c8c8c"></div><div class="lbl" id="pgtitle" style="left:0;top:58.6px;width:760px;height:16px"><span style="position:absolute;left:2.9px;top:0;letter-spacing:-0.199px">Страница</span><span style="position:absolute;left:57.8px;top:0;letter-spacing:0.292px">3:</span><span style="position:absolute;left:71.3px;top:0;letter-spacing:0.022px">Блок</span><span style="position:absolute;left:100.5px;top:0;letter-spacing:-0.015px">управления</span><span style="position:absolute;left:169.2px;top:0;letter-spacing:0.08px">обогрева</span><span style="position:absolute;left:223.6px;top:0;letter-spacing:-0.137px">передних</span><span style="position:absolute;left:277.5px;top:0;letter-spacing:-0.106px">сидений,</span><span style="position:absolute;left:329.0px;top:0;letter-spacing:0.198px">блок</span><span style="position:absolute;left:358.6px;top:0;letter-spacing:-0.025px">управления</span><span style="position:absolute;left:427.2px;top:0;letter-spacing:0.028px">Climatronic,</span><span style="position:absolute;left:495.2px;top:0;letter-spacing:0.298px">блок</span><span style="position:absolute;left:524.7px;top:0;letter-spacing:-0.045px">управления</span><span style="position:absolute;left:592.9px;top:0;letter-spacing:0.12px">климатической</span><span style="position:absolute;left:681.2px;top:0;letter-spacing:0.108px">установки</span></div><div class="lbl" id="crit" style="left:988px;top:59px"><span style="text-decoration:underline">К</span>ритерий поиска:</div><div class="sunk" style="left:1089px;top:54px;width:158px;height:22px;background:#fff"></div><div class="abs" style="left:1230px;top:56px;width:16px;height:19px;background:#f0f0f0;border-top:1px solid #fff;border-left:1px solid #fff;border-right:1.5px solid #6e6e6e;border-bottom:1.5px solid #6e6e6e"><div class="abs" style="left:3px;top:7px;width:0;height:0;border-left:4px solid transparent;border-right:4px solid transparent;border-top:4px solid #000"></div></div><div class="btn" style="left:1257px;top:54px;width:23px"><svg viewBox="0 0 16 16"><g fill="#a8a8a8"><path d="M2 9l1.500-3h2l1 2h1l1-2h2L12 9v5H8.500v-3h-3v3H2z"/><path d="M5 3c1-2 4-2.500 6-1l1-1v3.500H8.500L10 3.300C8.500 2.500 7 2.800 6 4z"/></g><path d="M3.500 10v3M10.500 10v3" stroke="#f0f0f0" stroke-width="1"/></svg></div><div class="btn" style="left:1280px;top:54px;width:23px"><svg viewBox="0 0 16 16"><g fill="#a8a8a8"><path d="M4 9l1.500-3h2l1 2h1l1-2h2L14 9v5h-3.500v-3h-3v3H4z"/><path d="M11 3c-1-2-4-2.500-6-1L4 1v3.500h3.500L6 3.300C7.500 2.500 9 2.800 10 4z"/></g><path d="M5.500 10v3M12.500 10v3" stroke="#f0f0f0" stroke-width="1"/></svg></div><div class="btn" style="left:1311px;top:54px;width:23px"><svg viewBox="0 0 16 16"><path d="M2 2.500h2M3 4.500h4M3 6.500h4M3 8.500h4M3 10.500h4M3 12.500h4" stroke="#a8a8a8" stroke-width="1"/><path d="M8.500 7.500L12 4v2.500h3v2h-3V11z" fill="#a8a8a8"/></svg></div><div class="btn" style="left:1334px;top:54px;width:23px"><svg viewBox="0 0 16 16"><path d="M4 2.500h2M1.500 7.500h1.500M5 4.500h4M5 6.500h4M5 8.500h4M5 10.500h4M5 12.500h4" stroke="#a8a8a8" stroke-width="1"/><path d="M16 7.500L12.500 4v2.500h-2.500v2h2.500V11z" fill="#a8a8a8"/></svg></div><div id="tabbar" class="abs"></div><div class="abs" style="left:0px;top:666px;width:16px;height:15px;background:#f0f0f0;border-right:1.500px solid #7e7e7e;border-left:1px solid #fff;border-top:1px solid #fff"><div class="abs" style="left:3px;top:1.500px;width:0;height:0;border-top:4.500px solid transparent;border-bottom:4.500px solid transparent;border-right:6px solid #808080"></div></div><div class="abs" style="left:16px;top:666px;width:16px;height:15px;background:#f0f0f0;border-right:1.500px solid #7e7e7e;border-left:1px solid #fff;border-top:1px solid #fff"><div class="abs" style="left:5px;top:1.500px;width:0;height:0;border-top:4.500px solid transparent;border-bottom:4.500px solid transparent;border-left:6px solid #808080"></div></div><svg class="abs" style="left:30px;top:664px" width="170" height="17" viewBox="30 664 170 17"><path d="M33.300 665.500L40.500 681.500H82L89 665.500Z" fill="#f0f0f0" stroke="#000" stroke-width="1.200"/><path d="M82.500 664L90.800 681.500H178L186.500 664Z" fill="#fff"/><path d="M83.600 665.500L91 681.500M177.800 681.500L185.600 665.500" fill="none" stroke="#000" stroke-width="1.500"/></svg><div class="abs" style="left:44.500px;top:665px;font-size:12.200px;line-height:16px;white-space:nowrap;letter-spacing:-0.300px">Обзор</div><div class="abs" id="tab2" style="left:93px;top:665px;font-size:12.200px;line-height:16px;font-weight:bold;white-space:nowrap;letter-spacing:-0.200px">Электросхема</div></body></html>
